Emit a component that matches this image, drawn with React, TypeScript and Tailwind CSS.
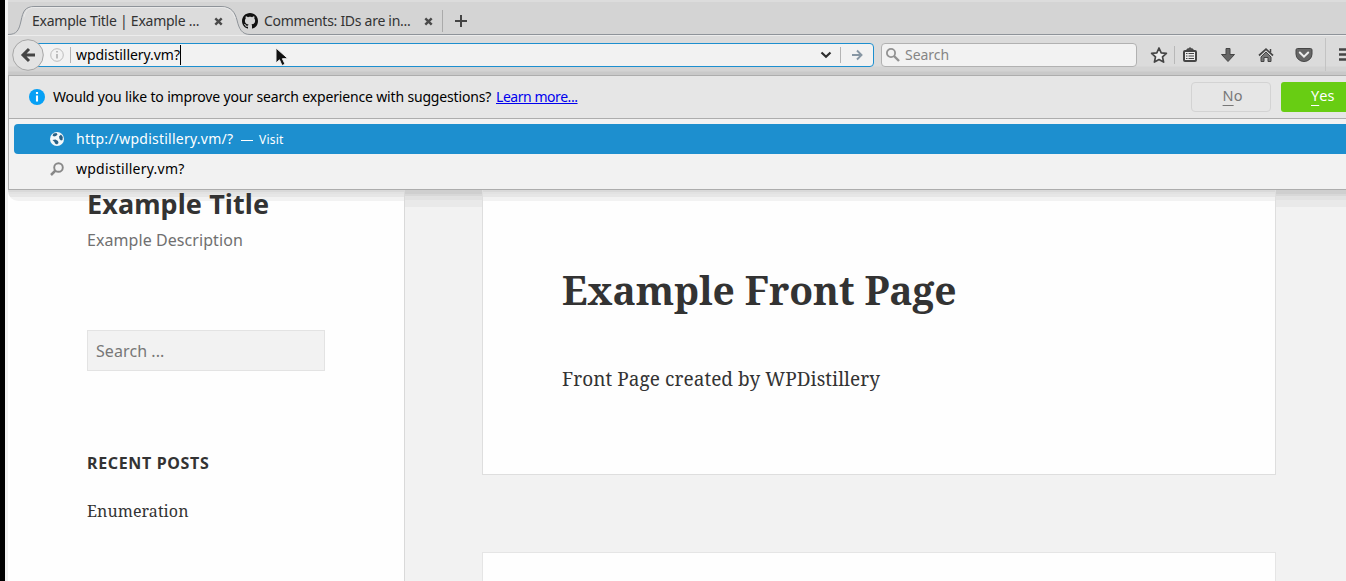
import React from "react";

const UI = "font-['Noto_Sans','Open_Sans',sans-serif] whitespace-nowrap";
const SERIF = "font-['Noto_Serif','Droid_Serif','DejaVu_Serif_Condensed','DejaVu_Serif',serif] whitespace-nowrap";

function CloseIcon() {
  return (
    <svg className="h-[9px] w-[9px] shrink-0" viewBox="0 0 9 9">
      <path d="M1.3 1.3l6.4 6.4M7.7 1.3L1.3 7.7" stroke="#4a4a4a" strokeWidth="2.4" />
    </svg>
  );
}

function GithubIcon() {
  return (
    <svg className="h-4 w-4 shrink-0" viewBox="0 0 16 16" fill="#111">
      <path d="M8 0C3.58 0 0 3.58 0 8c0 3.54 2.29 6.53 5.47 7.59.4.07.55-.17.55-.38 0-.19-.01-.82-.01-1.49-2.01.37-2.53-.49-2.69-.94-.09-.23-.48-.94-.82-1.13-.28-.15-.68-.52-.01-.53.63-.01 1.08.58 1.23.82.72 1.21 1.87.87 2.33.66.07-.52.28-.87.51-1.07-1.78-.2-3.64-.89-3.64-3.95 0-.87.31-1.59.82-2.15-.08-.2-.36-1.02.08-2.12 0 0 .67-.21 2.2.82.64-.18 1.32-.27 2-.27s1.36.09 2 .27c1.53-1.04 2.2-.82 2.2-.82.44 1.1.16 1.92.08 2.12.51.56.82 1.27.82 2.15 0 3.07-1.87 3.75-3.65 3.95.29.25.54.73.54 1.48 0 1.07-.01 1.93-.01 2.2 0 .21.15.46.55.38A8.01 8.01 0 0 0 16 8c0-4.42-3.58-8-8-8z" />
    </svg>
  );
}

function TabStrip() {
  return (
    <div className="relative h-[35px] shrink-0 bg-[#d4d4d4]">
      <svg className="absolute inset-0 h-[35px] w-full" width="1338" height="35">
        <rect width="1338" height="2" fill="#dcdcdc" />
        <path d="M0 34.5C9 34.5 11 30 13 21C15 11 17 6.500 27 6.500H213C224 6.500 227 13 229 20C231 29 234 34.500 242 34.500V35H0z" fill="#dcdcdc" />
        <path d="M0 34.500C9 34.500 11 30 13 21C15 11 17 6.500 27 6.500H213C224 6.500 227 13 229 20C231 29 234 34.500 242 34.500H1338" fill="none" stroke="#8e9399" strokeWidth="1" />
        <path d="M16 17C18 10 20 7.500 27 7.500H213C221 7.500 225 12 227 18" fill="none" stroke="#e9e9e9" strokeWidth="1" />
      </svg>
      <div className="relative flex h-full items-center pt-[7px] text-[14px] text-[#333]">
        <div className={`${UI} -mt-[2px] ml-6 w-[182px] tracking-[-0.25px]`}>Example Title | Example ...</div>
        <CloseIcon />
        <div className="ml-[19px] flex"><GithubIcon /></div>
        <div className={`${UI} -mt-[2px] ml-[6px] w-[160px] tracking-[-0.28px]`}>Comments: IDs are in...</div>
        <CloseIcon />
        <div className="ml-[9px] h-[22px] w-px bg-[#aaa]" />
        <svg className="ml-3 h-3 w-3" viewBox="0 0 12 12"><path d="M6 0v12M0 6h12" stroke="#444" strokeWidth="2" /></svg>
      </div>
    </div>
  );
}

function Toolbar() {
  return (
    <div className="relative flex h-10 shrink-0 bg-[linear-gradient(#ececec_0px,#ececec_1px,#dbdbdb_1px,#dbdbdb_31px,#d3d3d3_32px,#d3d3d3_36px,#c9c9c9_37px,#c9c9c9_40px)]">
      <div className="ml-5 mt-2 flex h-6 w-[846px] items-center rounded-r-sm border border-[#1d8fcf] bg-[#f2f2f2] pl-[21px]">
        <svg className="h-[14px] w-[14px] shrink-0" viewBox="0 0 14 14">
          <circle cx="7" cy="7" r="6.300" fill="none" stroke="#bcbcbc" />
          <path d="M7 6v4.500M7 3v1.500" stroke="#aaa" strokeWidth="1.500" />
        </svg>
        <div className="ml-[6px] h-4 w-px bg-[#b4b4b4]" />
        <div className={`${UI} ml-[5px] text-[14px] leading-5 tracking-[-0.05px] text-black`}>wpdistillery.vm?</div>
        <div className="h-5 w-px bg-black" />
        <svg className="ml-auto mr-2 h-2 w-[12px]" viewBox="0 0 12 8"><path d="M1.500 1.500L6 5.700l4.500-4.200" fill="none" stroke="#2d2d2d" strokeWidth="2.200" /></svg>
        <div className="h-4 w-px bg-[#b4b4b4]" />
        <svg className="ml-[11px] mr-[10px] h-3 w-[11px]" viewBox="0 0 11 12"><path d="M0 6h9.500M5 1.500L9.500 6 5 10.500" fill="none" stroke="#8796a3" strokeWidth="1.900" /></svg>
      </div>
      <svg className="absolute left-[4px] top-[4px] h-8 w-8" viewBox="0 0 32 32">
        <circle cx="16" cy="16" r="15.300" fill="#e3e3e3" stroke="#a6a6a6" />
        <path d="M23 16H12M17 10l-6 6 6 6" fill="none" stroke="#444" strokeWidth="3" />
      </svg>
      <div className="ml-[7px] mt-2 flex h-6 w-[256px] items-center rounded-sm border border-[#b1b1b1] bg-[#f2f2f2] pl-1">
        <svg className="h-[14px] w-[14px]" viewBox="0 0 14 14"><circle cx="5" cy="5" r="4.100" fill="none" stroke="#929292" strokeWidth="1.800" /><path d="M8 8l5 5" stroke="#929292" strokeWidth="2.400" /></svg>
        <div className={`${UI} ml-[5px] text-[14px] leading-5 tracking-[-0.05px] text-[#858585]`}>Search</div>
      </div>
      <svg className="h-10 w-[209px] shrink-0" viewBox="1137 35 209 40">
        <path d="M1159 48l2.200 4.800 5.200.6-3.900 3.500 1.100 5.200-4.600-2.600-4.600 2.600 1.100-5.200-3.900-3.500 5.200-.6z" fill="#ededed" stroke="#454545" strokeWidth="1.700" strokeLinejoin="round" />
        <path d="M1174.500 46v18" stroke="#b8b8b8" />
        <rect x="1184" y="51" width="12" height="10" rx="1" fill="#ededed" stroke="#454545" strokeWidth="2" />
        <path d="M1187 50v-1h2v-1h2v1h2v1z" fill="#666" stroke="#454545" />
        <path d="M1186 53.500h1.500m1 0h5.500m-8 2.500h1.500m1 0h5.500m-8 2.500h1.500m1 0h5.500" stroke="#454545" strokeWidth="1" />
        <path d="M1226 48.500h4v6h4.500l-6.500 7-6.500-7h4.500z" fill="#666" stroke="#454545" strokeLinejoin="round" />
        <path d="M1261 57l5-5 5 5v4.500h-3v-4h-4v4h-3z" fill="#777" stroke="#454545" />
        <path d="M1265 58h2v4h-2z" fill="#dbdbdb" />
        <path d="M1259 55.500l7-6.300 7 6.300" fill="none" stroke="#454545" strokeWidth="1.700" />
        <path d="M1270.500 49v3.500" stroke="#454545" strokeWidth="1.500" />
        <path d="M1297.500 48.500h13q1.500 0 1.500 1.500v4a8 7.500 0 0 1-16 0v-4q0-1.500 1.500-1.500z" fill="#666" stroke="#454545" />
        <path d="M1299.800 52.500l4.200 4.200 4.200-4.200" fill="none" stroke="#ededed" strokeWidth="2" strokeLinecap="round" />
        <path d="M1325.500 38v33" stroke="#c3c3c3" />
        <path d="M1339 49.500h7m-7 5h7m-7 5h7" stroke="#454545" strokeWidth="2.600" />
      </svg>
    </div>
  );
}

function Suggestions() {
  return (
    <div className="absolute left-[8px] top-[75px] flex h-[115px] w-[1338px] flex-col border-y border-l border-[#adadad] bg-[#f2f2f2] text-[14px]">
      <div className="flex h-[43px] shrink-0 items-center border-b border-[#adadad] bg-[#e6e6e6] pl-5">
        <svg className="h-4 w-4" viewBox="0 0 16 16"><circle cx="8" cy="8" r="8" fill="#06a0f5" /><path d="M8 6.500v6M8 3v2" stroke="white" strokeWidth="2.100" /></svg>
        <div className={`${UI} -mt-[2px] ml-2 w-[443px] tracking-[-0.16px] text-black`}>Would you like to improve your search experience with suggestions?</div>
        <div className={`${UI} -mt-[2px] tracking-[-0.45px] text-[#0000ee] underline underline-offset-1`}>Learn more...</div>
        <div className={`${UI} ml-auto flex h-[30px] w-20 items-center justify-center rounded-[4px] border border-[#d3d3d3] pb-[2px] pl-[3px] text-[14.500px] text-[#777]`}><span className="underline underline-offset-4">N</span>o</div>
        <div className={`${UI} ml-[10px] flex h-[30px] w-[65px] items-center rounded-l-[3px] bg-[#68cd13] pb-[2px] pl-[30px] text-[14.500px] text-white`}><span className="underline underline-offset-4">Y</span>es</div>
      </div>
      <div className="ml-[5px] mt-[5px] flex h-[30px] shrink-0 items-center rounded-l-sm bg-[#1d8fcf] pl-[36px] text-white">
        <svg className="h-[14px] w-[14px]" viewBox="0 0 14 14"><circle cx="7" cy="7" r="7" fill="#f4f8fa" /><path d="M3.500 1.500l3-.5 1 1.500-1.500 1.500-2 .5-1.500-1zM9 4.500l2-2 1.800 2.500-.3 3-1.500.5-1.500-1.500zM2.500 8l3-.5 2.500 1.500.5 2-1.500 1.500-2-1-.5-1.500z" fill="#286186" /></svg>
        <div className={`${UI} -mt-[2px] ml-[12px] w-[165px] tracking-[0.24px]`}>http://wpdistillery.vm/?</div>
        <div className="mt-[2px] h-px w-3 bg-white" />
        <div className={`${UI} ml-[6px] mt-[2px] text-[12px] tracking-[0.2px]`}>Visit</div>
      </div>
      <div className="ml-[41px] flex h-[30px] items-center text-black">
        <svg className="h-[14px] w-[14px]" viewBox="0 0 14 14"><circle cx="8.500" cy="5.500" r="4.300" fill="none" stroke="#888" strokeWidth="1.900" /><path d="M5.500 8.500L1 13" stroke="#888" strokeWidth="2.500" /></svg>
        <div className={`${UI} -mt-[2px] ml-[12px] tracking-[0.24px]`}>wpdistillery.vm?</div>
      </div>
    </div>
  );
}

const BAND = "bg-[linear-gradient(#d9d9d9_0px,#d9d9d9_2px,#e2e2e2_2px,#e2e2e2_4px,#e6e6e6_4px,#e6e6e6_7px,#f2f2f2_7px)]";

function Page() {
  return (
    <div className="flex min-h-0 flex-1 bg-[#f2f2f2] pt-[115px] text-[#333]">
      <aside className="flex w-[397px] shrink-0 flex-col border-r border-[#d9d9d9] bg-[#fefefe]">
        <div className={`h-[11px] shrink-0 rounded-bl-[10px] ${BAND}`} />
        <div className="-mt-[11px] flex flex-col pl-[79px]">
          <div className={`${UI} h-[30px] text-[27px] font-bold leading-[27px] tracking-[0.09px]`}>Example Title</div>
          <div className={`${UI} mt-[8px] h-6 text-[16px] leading-6 tracking-[0.07px] text-[#707070]`}>Example Description</div>
          <div className={`${UI} mt-[78px] flex h-[41px] w-[238px] items-center border border-[#e3e3e3] bg-[#f2f2f2] pl-2 text-[16px] tracking-[0.08px] text-[#777]`}>Search ...</div>
          <div className={`${UI} mt-[80px] h-6 text-[16px] font-bold leading-6 tracking-[0.65px]`}>RECENT POSTS</div>
          <div className={`${SERIF} mt-[24px] h-6 text-[16px] leading-6 tracking-[0.08px]`}>Enumeration</div>
        </div>
      </aside>
      <div className="flex flex-1 flex-col">
        <div className="h-[17px] shrink-0 bg-[linear-gradient(#cfcfcf_0px,#cfcfcf_4px,#d8d8d8_4px,#d8d8d8_6px,#e2e2e2_6px,#e2e2e2_10px,#e9e9e9_10px)]" />
        <article className="-mt-[17px] ml-[77px] h-[285px] w-[794px] shrink-0 border border-t-0 border-[#dedede] bg-[#fefefe]">
          <div className={`h-[11px] ${BAND}`} />
          <div className="ml-[79px]">
            <h1 className={`${SERIF} mt-[63px] h-[52px] text-[39px] font-bold leading-[52px] tracking-[-0.13px]`}>Example Front Page</h1>
            <p className={`${SERIF} mt-[48px] h-[30px] text-[19px] leading-[30px] tracking-[0.05px]`}>Front Page created by WPDistillery</p>
          </div>
        </article>
        <article className="ml-[77px] mt-[77px] h-[60px] w-[794px] shrink-0 border border-[#e5e5e5] bg-[#fefefe]" />
      </div>
    </div>
  );
}

export default function App() {
  return (
    <div className="relative flex h-[581px] w-[1346px] overflow-hidden bg-[#f2f2f2]">
      <div className="w-[5px] shrink-0 bg-black" />
      <div className="w-[3px] shrink-0 bg-[#f2f2f2]" />
      <div className="flex w-[1338px] flex-col">
        <TabStrip />
        <Toolbar />
        <Page />
      </div>
      <Suggestions />
      <svg className="absolute left-[275px] top-[47px] h-5 w-4" viewBox="0 0 16 20">
        <path d="M1 1v15l3.500-3.200L7 18.500l3-1.300-2.600-5.500H13z" fill="#111" stroke="#eee" strokeWidth="1" />
      </svg>
    </div>
  );
}
